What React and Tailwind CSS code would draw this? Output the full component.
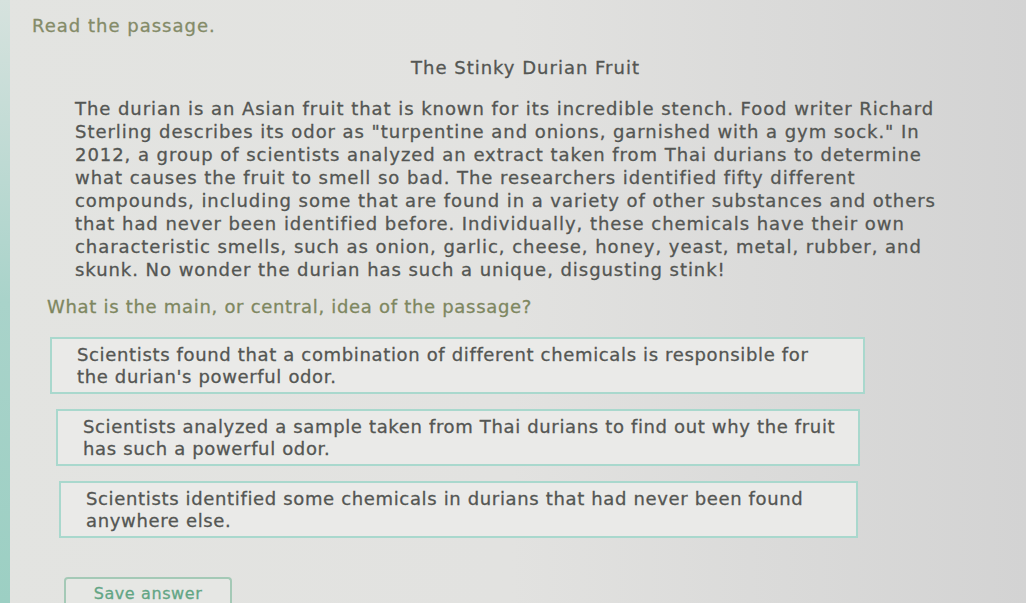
import React from 'react';

const passage = [
  'The durian is an Asian fruit that is known for its incredible stench. Food writer Richard',
  'Sterling describes its odor as "turpentine and onions, garnished with a gym sock." In',
  '2012, a group of scientists analyzed an extract taken from Thai durians to determine',
  'what causes the fruit to smell so bad. The researchers identified fifty different',
  'compounds, including some that are found in a variety of other substances and others',
  'that had never been identified before. Individually, these chemicals have their own',
  'characteristic smells, such as onion, garlic, cheese, honey, yeast, metal, rubber, and',
  'skunk. No wonder the durian has such a unique, disgusting stink!',
];

const choices = [
  {
    lines: ['Scientists found that a combination of different chemicals is responsible for', "the durian's powerful odor."],
    box: 'ml-[40px] w-[815px]',
  },
  {
    lines: ['Scientists analyzed a sample taken from Thai durians to find out why the fruit', 'has such a powerful odor.'],
    box: 'ml-[46px] w-[804px]',
  },
  {
    lines: ['Scientists identified some chemicals in durians that had never been found', 'anywhere else.'],
    box: 'ml-[49px] w-[799px]',
  },
];

export default function App() {
  return (
    <div
      className="w-[1026px] h-[603px] overflow-hidden flex bg-gradient-to-r from-[#e3e4e1] via-[#e2e2e0] to-[#d3d3d3] [-webkit-text-stroke:0.3px_currentColor]"
      style={{ fontFamily: '"DejaVu Sans", Verdana, sans-serif' }}
    >
      {/* teal rail on the left edge */}
      <div className="w-[10px] shrink-0 bg-gradient-to-b from-[#d6e2de] via-[#a9d3ca] to-[#9ccfc3]" />

      <div className="flex-1 flex flex-col">
        <div className="pl-[22px] pt-[15px] text-[18px] leading-[22px] tracking-[1px] text-[#848b68]">Read the passage.</div>

        <div className="pt-[20px] pl-[401px] text-[18px] leading-[22px] tracking-[1px] text-[#545653]">The Stinky Durian Fruit</div>

        <div className="pt-[18px] pl-[65px] text-[18px] leading-[23px] tracking-[0.95px] text-[#545653]">
          {passage.map((line, i) => (
            <div key={i} className="whitespace-nowrap">{line}</div>
          ))}
        </div>

        <div className="pt-[14px] pl-[37px] text-[18px] leading-[23px] tracking-[0.7px] text-[#7e8760]">
          What is the main, or central, idea of the passage?
        </div>

        <div className="mt-[19px] flex flex-col gap-[15px]">
          {choices.map((c, i) => (
            <div
              key={i}
              className={`${c.box} h-[57px] border-2 border-[#a9d8cd] bg-[#eaeae8] pl-[25px] pt-[5px] text-[18px] leading-[22px] tracking-[0.65px] text-[#545653]`}
            >
              {c.lines.map((l, j) => (
                <div key={j} className="whitespace-nowrap">{l}</div>
              ))}
            </div>
          ))}
        </div>

        <div className="mt-[39px] ml-[54px] w-[168px] h-[40px] border-2 border-b-0 border-[#a4c9b6] bg-[#e6e7e4] rounded-t-[4px] flex justify-center pt-[5px] text-[16px] leading-[20px] tracking-[0.6px] text-[#62a584]">
          Save answer
        </div>
      </div>
    </div>
  );
}
